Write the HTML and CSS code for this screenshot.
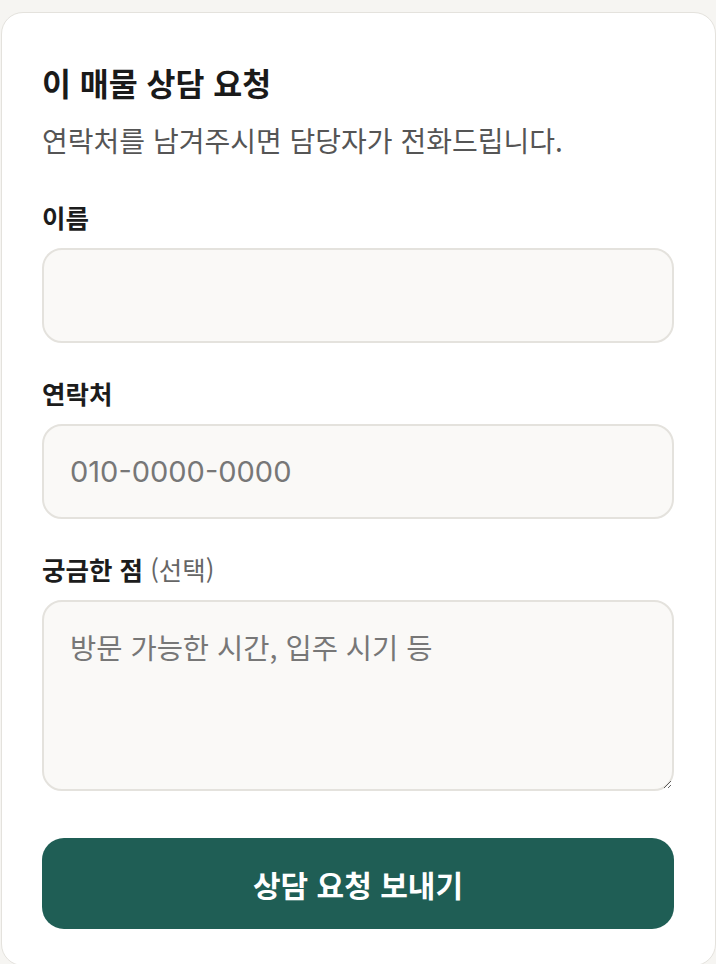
FILE: index.html
```html
<!DOCTYPE html>
<html lang="ko">

<head>
    <meta charset="utf-8">
    <meta name="viewport" content="width=device-width, initial-scale=1">
    <link rel="stylesheet" href="styles.css">
</head>

<body>

    <form class="inquiry-card">
        <h2 class="inquiry-title">이 매물 상담 요청</h2>
        <p class="inquiry-desc">연락처를 남겨주시면 담당자가 전화드립니다.</p>

        <div class="field">
            <label class="field-label" for="name">이름</label>
            <input class="field-input" id="name" type="text">
        </div>

        <div class="field">
            <label class="field-label" for="phone">연락처</label>
            <input class="field-input" id="phone" type="tel" placeholder="010-0000-0000">
        </div>

        <div class="field">
            <label class="field-label" for="memo">궁금한 점 <span class="optional">(선택)</span></label>
            <textarea class="field-input field-textarea" id="memo" placeholder="방문 가능한 시간, 입주 시기 등"></textarea>
        </div>

        <button class="submit-btn" type="button">상담 요청 보내기</button>
    </form>

</body>

</html>
```

FILE: styles.css
```css
* {
    box-sizing: border-box;
}

body {
    margin: 0;
    padding: 12px 0 0 1px;
    background: #f6f5f2;
    font-family: "Noto Sans CJK KR", "Noto Sans", sans-serif;
    color: #1c1c1c;
}

/* 상담 요청 카드 */
.inquiry-card {
    width: 715px;
    background: #ffffff;
    border: 1px solid #e4e2dd;
    border-radius: 22px;
    padding: 47px 41px 36px 40px;
}

.inquiry-title {
    margin: 0;
    font-size: 31.5px;
    line-height: 44px;
    font-weight: 700;
    color: #1a1a1a;
}

.inquiry-desc {
    margin: 18px 0 43px;
    font-size: 28px;
    line-height: 36px;
    color: #555555;
}

.field {
    display: flex;
    flex-direction: column;
    gap: 15px;
    margin-bottom: 34px;
}

.field-label {
    font-size: 25.5px;
    line-height: 32px;
    font-weight: 700;
}

/* (선택) 표시는 보통 굵기 */
.optional {
    font-weight: 400;
    color: #666666;
}

.field-input {
    width: 100%;
    height: 95px;
    padding: 0 26px;
    background: #faf9f7;
    border: 2px solid #e4e2dd;
    border-radius: 20px;
    font-family: "Inter", "Noto Sans CJK KR", sans-serif;
    font-size: 29px;
    color: #222222;
    outline: none;
}

.field-input::placeholder {
    color: #777777;
}

.field-textarea {
    height: 191px;
    padding: 25px 26px;
    font-family: "Noto Sans CJK KR", sans-serif;
    font-size: 28.5px;
    line-height: 40px;
}

/* 제출 버튼 */
.submit-btn {
    display: block;
    width: 100%;
    height: 91px;
    margin-top: 47px;
    border: none;
    border-radius: 22px;
    background: #1f5e55;
    color: #ffffff;
    font-family: "Noto Sans CJK KR", sans-serif;
    font-size: 30px;
    font-weight: 700;
    cursor: pointer;
}
```
